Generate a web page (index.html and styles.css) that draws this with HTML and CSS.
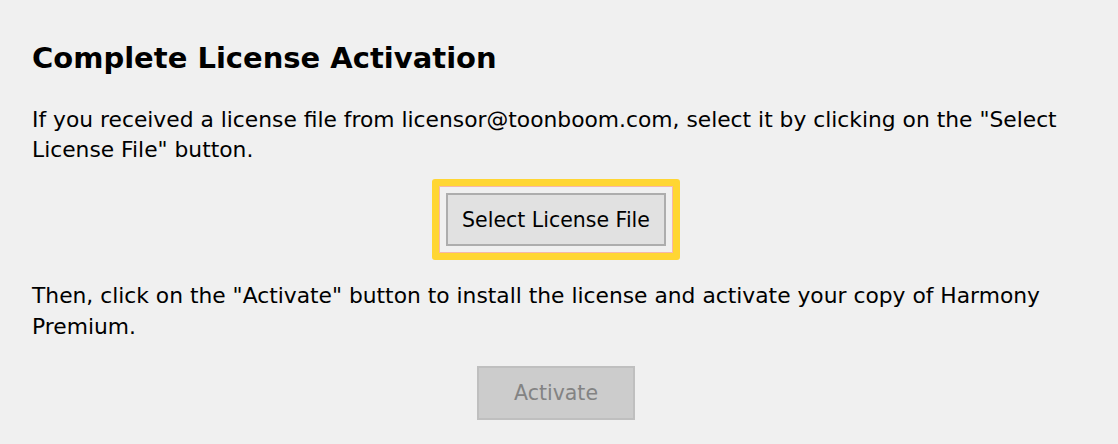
FILE: index.html
```html
<!DOCTYPE html>
<html lang="en">
<head>
<meta charset="utf-8">
<title>Complete License Activation</title>
<link rel="stylesheet" href="styles.css">
</head>
<body>
<main class="panel">
  <h1 class="title">Complete License Activation</h1>
  <p class="text">If you received a license file from licensor@toonboom.com, select it by clicking on the "Select License File" button.</p>
  <div class="action action-select">
    <div class="focus-ring">
      <button class="btn" type="button">Select License File</button>
    </div>
  </div>
  <p class="text text-second">Then, click on the "Activate" button to install the license and activate your copy of Harmony Premium.</p>
  <div class="action action-activate">
    <button class="btn btn-disabled" type="button" disabled>Activate</button>
  </div>
</main>
</body>
</html>
```
FILE: styles.css
```css
html, body {
  margin: 0;
  padding: 0;
  background: #f0f0f0;
}
body {
  width: 1118px;
  height: 444px;
  overflow: hidden;
  font-family: "DejaVu Sans", sans-serif;
  color: #000;
}
.panel {
  padding: 40px 38px 0 32px;
  display: flex;
  flex-direction: column;
}
.title {
  margin: 0;
  font-family: "DejaVu Sans", sans-serif;
  font-size: 29px;
  line-height: 36px;
  font-weight: bold;
}
.text {
  margin: 29px 0 0 0;
  font-size: 21.8px;
  line-height: 30px;
}
.text-second {
  margin-top: 20px;
  line-height: 31px;
}
.action {
  display: flex;
  justify-content: center;
}
.action-select {
  margin-top: 14px;
}
.action-activate {
  margin-top: 24px;
}
.focus-ring {
  border: 7px solid #ffd633;
  border-radius: 3px;
  padding: 7px;
  box-shadow: inset 0 0 0 1px #f7b7a8;
  display: flex;
}
.btn {
  font-family: "DejaVu Sans", sans-serif;
  font-size: 20.5px;
  color: #000;
  background: #e1e1e1;
  border: 2px solid #adadad;
  width: 220px;
  height: 53px;
  padding: 0;
  margin: 0;
}
.btn-disabled {
  width: 158px;
  height: 54px;
  background: #cccccc;
  border: 2px solid #bfbfbf;
  color: #838383;
}
```
